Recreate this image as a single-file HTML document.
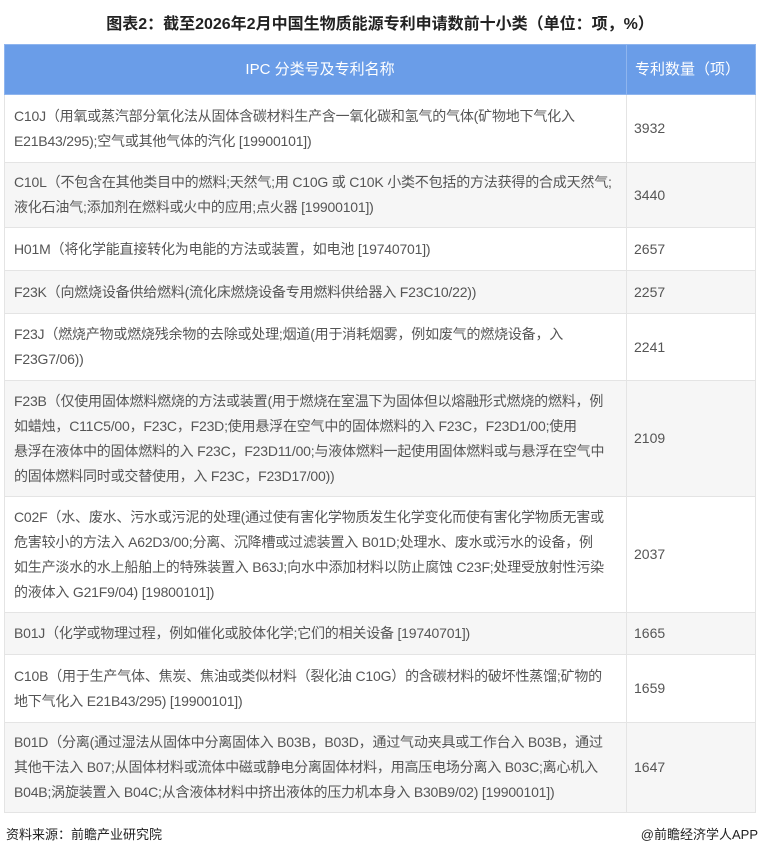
<!DOCTYPE html>
<html><head><meta charset="utf-8"><style>
body{margin:0;width:760px;height:855px;background:#fff;font-family:"Liberation Sans","Noto Sans CJK SC",sans-serif;overflow:hidden;position:relative}
.title{position:absolute;top:10px;left:0;width:760px;text-align:center;font-size:16px;font-weight:bold;color:#222}
table{position:absolute;left:4px;top:44px;width:751px;border-collapse:collapse;table-layout:fixed}
td,th{border:1px solid #e4e4e4;font-size:14px;line-height:25px;color:#555;padding:0 0 0 9px;vertical-align:middle;font-weight:normal;white-space:nowrap;overflow:hidden}
td{letter-spacing:-0.2px}
th{background:#6a9de8;color:#fff;font-size:15px;height:49px;border-color:#8fb5ee}
th.c1{text-align:center}
th.c2{text-align:left;padding-left:8px}
tr:nth-child(odd) td{background:#f6f6f6}
tr:nth-child(even) td{background:#fff}
td.n{padding-left:7px;letter-spacing:0}
.foot{position:absolute;top:824px;font-size:13px;color:#222}
</style></head><body>
<div class="title">图表2：截至2026年2月中国生物质能源专利申请数前十小类（单位：项，%）</div>
<table>
<colgroup><col style="width:622px"><col style="width:129px"></colgroup>
<tr><th class="c1">IPC 分类号及专利名称</th><th class="c2">专利数量（项）</th></tr>
<tr><td style="height:67px">C10J（用氧或蒸汽部分氧化法从固体含碳材料生产含一氧化碳和氢气的气体(矿物地下气化入<br>E21B43/295);空气或其他气体的汽化 [19900101])</td><td class="n">3932</td></tr>
<tr><td style="height:64px">C10L（不包含在其他类目中的燃料;天然气;用 C10G 或 C10K 小类不包括的方法获得的合成天然气;<br>液化石油气;添加剂在燃料或火中的应用;点火器 [19900101])</td><td class="n">3440</td></tr>
<tr><td style="height:42px">H01M（将化学能直接转化为电能的方法或装置，如电池 [19740701])</td><td class="n">2657</td></tr>
<tr><td style="height:42px">F23K（向燃烧设备供给燃料(流化床燃烧设备专用燃料供给器入 F23C10/22))</td><td class="n">2257</td></tr>
<tr><td style="height:66px">F23J（燃烧产物或燃烧残余物的去除或处理;烟道(用于消耗烟雾，例如废气的燃烧设备，入<br>F23G7/06))</td><td class="n">2241</td></tr>
<tr><td style="height:115px">F23B（仅使用固体燃料燃烧的方法或装置(用于燃烧在室温下为固体但以熔融形式燃烧的燃料，例<br>如蜡烛，C11C5/00，F23C，F23D;使用悬浮在空气中的固体燃料的入 F23C，F23D1/00;使用<br>悬浮在液体中的固体燃料的入 F23C，F23D11/00;与液体燃料一起使用固体燃料或与悬浮在空气中<br>的固体燃料同时或交替使用，入 F23C，F23D17/00))</td><td class="n">2109</td></tr>
<tr><td style="height:115px">C02F（水、废水、污水或污泥的处理(通过使有害化学物质发生化学变化而使有害化学物质无害或<br>危害较小的方法入 A62D3/00;分离、沉降槽或过滤装置入 B01D;处理水、废水或污水的设备，例<br>如生产淡水的水上船舶上的特殊装置入 B63J;向水中添加材料以防止腐蚀 C23F;处理受放射性污染<br>的液体入 G21F9/04) [19800101])</td><td class="n">2037</td></tr>
<tr><td style="height:41px">B01J（化学或物理过程，例如催化或胶体化学;它们的相关设备 [19740701])</td><td class="n">1665</td></tr>
<tr><td style="height:67px">C10B（用于生产气体、焦炭、焦油或类似材料（裂化油 C10G）的含碳材料的破坏性蒸馏;矿物的<br>地下气化入 E21B43/295) [19900101])</td><td class="n">1659</td></tr>
<tr><td style="height:89px">B01D（分离(通过湿法从固体中分离固体入 B03B，B03D，通过气动夹具或工作台入 B03B，通过<br>其他干法入 B07;从固体材料或流体中磁或静电分离固体材料，用高压电场分离入 B03C;离心机入<br>B04B;涡旋装置入 B04C;从含液体材料中挤出液体的压力机本身入 B30B9/02) [19900101])</td><td class="n">1647</td></tr>
</table>
<div class="foot" style="left:6px">资料来源：前瞻产业研究院</div>
<div class="foot" style="right:2px">@前瞻经济学人APP</div>
</body></html>
